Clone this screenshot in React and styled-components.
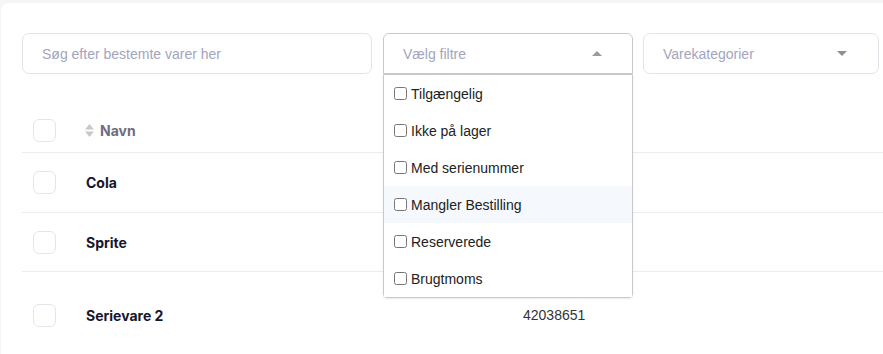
import styled, { createGlobalStyle } from "styled-components";

const GlobalStyle = createGlobalStyle`
  html, body {
    margin: 0;
    padding: 0;
    background: #f5f5f6;
    overflow: hidden;
  }
  body {
    font-family: "Liberation Sans", Arial, sans-serif;
  }
`;

const filters = [
  "Tilgængelig",
  "Ikke på lager",
  "Med serienummer",
  "Mangler Bestilling",
  "Reserverede",
  "Brugtmoms",
];

const rows = [
  { name: "Cola", height: 60 },
  { name: "Sprite", height: 59 },
  { name: "Serievare 2", number: "42038651", height: 86 },
];

const Card = styled.div`
  margin: 3px 0 0 1px;
  height: 360px;
  background: #fff;
  border-radius: 8px 0 0 8px;
  padding: 30px 5px 0 21px;
  box-sizing: border-box;
`;

const Toolbar = styled.div`
  display: flex;
  gap: 10px;
  align-items: flex-start;
`;

const Field = styled.div`
  position: relative;
  flex: none;
  width: ${(p) => p.$width}px;
  margin-left: ${(p) => p.$offset || 0}px;
  height: 41px;
  box-sizing: border-box;
  border: 1px solid ${(p) => (p.$open ? "#c9c9cc" : "#e3e3ea")};
  border-radius: ${(p) => (p.$open ? "6px 6px 0 0" : "7px")};
  display: flex;
  align-items: center;
  padding: 0 19px;
  font-size: 14px;
  color: #a2a5bd;
  background: #fff;
`;

const Placeholder = styled.span`
  flex: 1;
`;

const Caret = styled.span`
  width: 0;
  height: 0;
  border-left: 5px solid transparent;
  border-right: 5px solid transparent;
  ${(p) =>
    p.$up
      ? "border-bottom: 5px solid #9a9a9a;"
      : "border-top: 5px solid #8f8f8f;"}
  margin-right: ${(p) => p.$right}px;
`;

const Menu = styled.ul`
  position: absolute;
  top: 40px;
  left: -1px;
  right: -1px;
  margin: 0;
  padding: 0;
  list-style: none;
  background: #fff;
  border: 1px solid #c9c9cc;
  border-radius: 0 0 4px 4px;
  box-shadow: 0 1px 2px rgba(0, 0, 0, 0.08);
  z-index: 2;
`;

const Option = styled.li`
  height: 37px;
  display: flex;
  align-items: center;
  padding-left: 10px;
  font-size: 14px;
  color: #222;
  background: ${(p) => (p.$active ? "#f5f8fd" : "#fff")};

  input {
    width: 13px;
    height: 13px;
    margin: 0 4px 0 0;
  }
`;

const Table = styled.div`
  margin-top: 35px;
  margin-right: -5px;
`;

const Row = styled.div`
  display: grid;
  grid-template-columns: 63px 438px 1fr;
  align-items: center;
  height: ${(p) => p.$height}px;
  border-bottom: ${(p) => (p.$last ? "none" : "1px solid #ececf0")};
  box-sizing: border-box;
`;

const Box = styled.span`
  display: block;
  width: 23px;
  height: 23px;
  margin-left: 11px;
  border: 1px solid #e4e4ec;
  border-radius: 6px;
  box-sizing: border-box;
`;

const HeadCell = styled.div`
  display: flex;
  align-items: center;
  gap: 6px;
  font-family: Inter, "Liberation Sans", sans-serif;
  font-weight: 700;
  font-size: 14px;
  color: #6e6e82;
`;

const Name = styled.div`
  font-family: Inter, "Liberation Sans", sans-serif;
  font-weight: 700;
  font-size: 14px;
  color: #16152b;
  padding-left: 1px;
`;

const Number = styled.div`
  font-size: 14px;
  color: #333;
`;

const SortIcon = () => (
  <svg width="9" height="13" viewBox="0 0 9 13">
    <path d="M4.5 0 L9 5.5 L0 5.5 Z" fill="#c8c8cc" />
    <path d="M4.5 13 L9 7.5 L0 7.5 Z" fill="#c8c8cc" />
  </svg>
);

export default function App() {
  return (
    <>
      <GlobalStyle />
      <Card>
        <Toolbar>
          <Field $width={350}>
            <Placeholder>Søg efter bestemte varer her</Placeholder>
          </Field>
          <Field $width={250} $offset={1} $open>
            <Placeholder>Vælg filtre</Placeholder>
            <Caret $up $right={11} />
            <Menu>
              {filters.map((f) => (
                <Option key={f} $active={f === "Mangler Bestilling"}>
                  <input type="checkbox" readOnly />
                  {f}
                </Option>
              ))}
            </Menu>
          </Field>
          <Field $width={236}>
            <Placeholder>Varekategorier</Placeholder>
            <Caret $right={12} />
          </Field>
        </Toolbar>

        <Table>
          <Row $height={44}>
            <Box />
            <HeadCell>
              <SortIcon />
              Navn
            </HeadCell>
            <div />
          </Row>
          {rows.map((r, i) => (
            <Row key={r.name} $height={r.height} $last={i === rows.length - 1}>
              <Box />
              <Name>{r.name}</Name>
              <Number>{r.number}</Number>
            </Row>
          ))}
        </Table>
      </Card>
    </>
  );
}
